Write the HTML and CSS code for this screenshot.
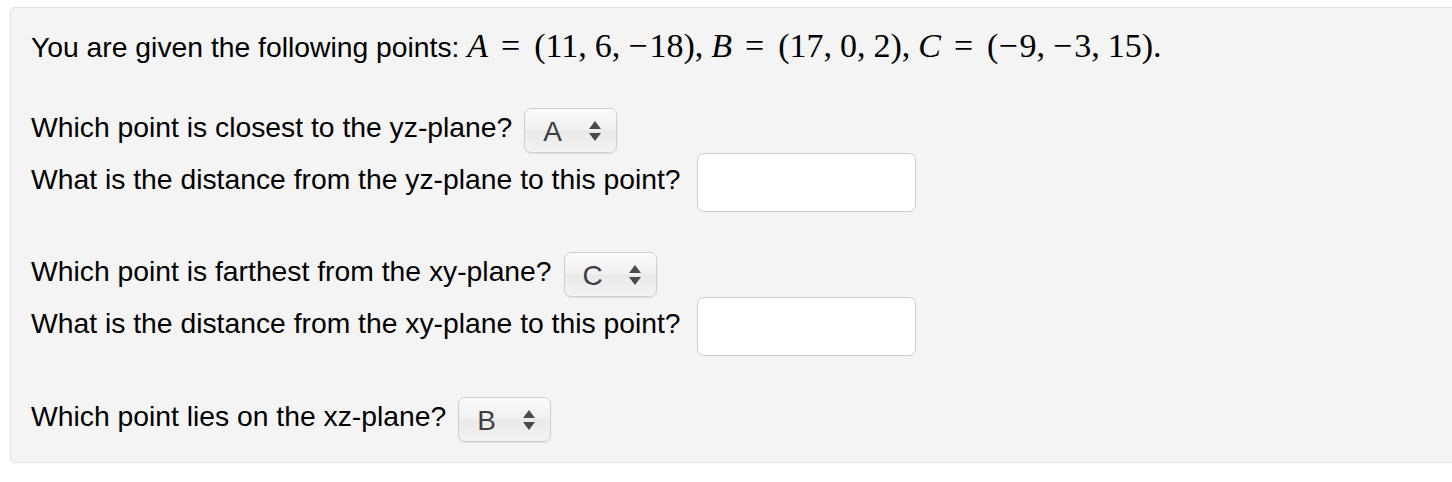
FILE: index.html
```html
<!DOCTYPE html>
<html>
<head>
<meta charset="utf-8">
<link rel="stylesheet" href="styles.css">
</head>
<body>
<div class="problem">
  <p class="intro">You are given the following points: <span class="math"><i>A</i><span class="rel">=</span>(11,<span class="th"></span>6,<span class="th"></span><span class="neg">−</span>18),</span> <span class="math"><i>B</i><span class="rel">=</span>(17,<span class="th"></span>0,<span class="th"></span>2),</span> <span class="math"><i>C</i><span class="rel">=</span>(<span class="neg">−</span>9,<span class="th"></span><span class="neg">−</span>3,<span class="th"></span>15).</span></p>

  <div class="group">
    <div class="row row-sel">
      <span class="q">Which point is closest to the yz-plane?</span>
      <div class="select"><span class="val">A</span><svg class="arrows" width="14" height="22" viewBox="0 0 14 22"><path d="M7 1 L13 9 L1 9 Z" fill="#4a4a4a"/><path d="M1 13 L13 13 L7 21 Z" fill="#4a4a4a"/></svg></div>
    </div>
    <div class="row row-in">
      <span class="q">What is the distance from the yz-plane to this point?</span>
      <div class="input"></div>
    </div>
  </div>

  <div class="group">
    <div class="row row-sel">
      <span class="q">Which point is farthest from the xy-plane?</span>
      <div class="select"><span class="val">C</span><svg class="arrows" width="14" height="22" viewBox="0 0 14 22"><path d="M7 1 L13 9 L1 9 Z" fill="#4a4a4a"/><path d="M1 13 L13 13 L7 21 Z" fill="#4a4a4a"/></svg></div>
    </div>
    <div class="row row-in">
      <span class="q">What is the distance from the xy-plane to this point?</span>
      <div class="input"></div>
    </div>
  </div>

  <div class="group group-last">
    <div class="row row-sel">
      <span class="q">Which point lies on the xz-plane?</span>
      <div class="select"><span class="val">B</span><svg class="arrows" width="14" height="22" viewBox="0 0 14 22"><path d="M7 1 L13 9 L1 9 Z" fill="#4a4a4a"/><path d="M1 13 L13 13 L7 21 Z" fill="#4a4a4a"/></svg></div>
    </div>
  </div>
</div>
</body>
</html>
```

FILE: styles.css
```css
html, body {
  margin: 0;
  padding: 0;
  background: #ffffff;
  overflow: hidden;
}

.problem {
  margin: 7px -20px 0 10px;
  padding: 21px 0 20px 20px;
  background: #f4f4f4;
  border: 1px solid #e0e0e0;
  border-radius: 5px;
  font-family: "Liberation Sans", Arial, sans-serif;
  font-size: 28.3px;
  color: #000;
}

.intro {
  margin: 0;
  line-height: 34px;
}

.math {
  font-family: "Liberation Serif", "Times New Roman", serif;
  font-size: 34px;
  white-space: nowrap;
}

.math i {
  font-style: italic;
}

.rel {
  margin: 0 14px 0 13px;
}

.th {
  display: inline-block;
  width: 8px;
}

.neg {
  margin-right: 2px;
}

.group {
  display: flex;
  flex-direction: column;
  margin-top: 40px;
}

.group:first-of-type {
  margin-top: 44px;
}

.group-last {
  margin-top: 41px;
}

.row {
  display: flex;
  align-items: center;
}

.row-sel {
  height: 45px;
}

.row-in {
  height: 59px;
}

.q {
  line-height: 32px;
  padding-bottom: 7px;
}

.select {
  margin-left: 12px;
  box-sizing: border-box;
  width: 93px;
  height: 45px;
  border: 1px solid #cfcfcf;
  border-radius: 7px;
  background: linear-gradient(#fbfbfb 0%, #f0f0f0 48%, #e9e9e9 52%, #f3f3f3 100%);
  box-shadow: 0 1px 1px rgba(0, 0, 0, 0.08);
  display: flex;
  align-items: center;
  padding: 0 14px 0 18px;
  justify-content: space-between;
}

.val {
  font-size: 28px;
  color: #3e3e3e;
  line-height: 28px;
  padding-top: 2px;
}

.arrows {
  display: block;
}

.input {
  margin-left: 16px;
  box-sizing: border-box;
  width: 219px;
  height: 59px;
  background: #ffffff;
  border: 1px solid #cccccc;
  border-radius: 7px;
}
```
